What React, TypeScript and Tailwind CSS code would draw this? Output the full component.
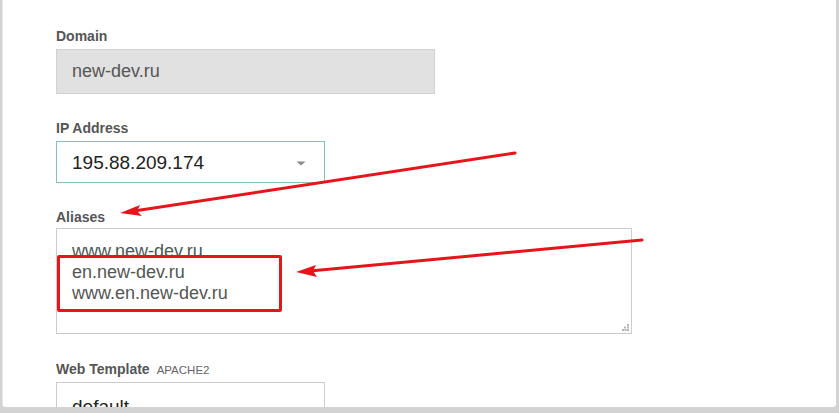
import React from 'react';

function Label({ children }: { children: React.ReactNode }) {
  return <div className="h-4 text-[14px] leading-4 font-bold text-[#555]">{children}</div>;
}

function Caret() {
  return (
    <svg width="10" height="5" viewBox="0 0 10 5" className="block">
      <path d="M0.5 0.5 H9.5 L5 4.5 Z" fill="#8a8a8a" />
    </svg>
  );
}

function Arrows() {
  return (
    <svg className="absolute left-0 top-0 pointer-events-none" width="839" height="413" viewBox="0 0 839 413">
      <line x1="515" y1="153" x2="134" y2="211" stroke="#e8141b" strokeWidth="3" strokeLinecap="round" />
      <path d="M120 213 L140 205 L137 211 L142 216 Z" fill="#e8141b" />
      <line x1="642" y1="240" x2="310" y2="271" stroke="#e8141b" strokeWidth="3" strokeLinecap="round" />
      <path d="M296 272 L316 265 L313 271 L317 277 Z" fill="#e8141b" />
    </svg>
  );
}

export default function App() {
  return (
    <div className="relative w-[839px] h-[413px] overflow-hidden bg-[#d3d3d3] font-['Liberation_Sans',Arial,sans-serif]">
      <div className="ml-[2px] w-[834px] h-[407px] bg-white rounded-b-[3px] border-l border-[#e6e6e6] pl-[53px] pt-[28px] overflow-hidden">
        <Label>Domain</Label>
        <div className="mt-[5px] w-[379px] h-[45px] bg-[#e1e1e1] border border-[#d2d2d2] flex items-center pl-[15px] text-[18px] text-[#555]">
          new-dev.ru
        </div>

        <div className="mt-[26px]">
          <Label>IP Address</Label>
        </div>
        <div className="mt-[5px] w-[269px] h-[42px] border border-[#7fc4bf] flex items-center justify-between pl-[15px] pr-[18px] pt-[3px] text-[19px] text-[#222]">
          <span>195.88.209.174</span>
          <Caret />
        </div>

        <div className="mt-[26px]">
          <Label>Aliases</Label>
        </div>
        <div className="relative mt-[3px] w-[576px] h-[106px] border border-[#cccccc] pl-[15px] pt-[12px] text-[18px] leading-[21px] text-[#555]">
          <div>www.new-dev.ru</div>
          <div>en.new-dev.ru</div>
          <div>www.en.new-dev.ru</div>
          <div className="absolute left-0 top-[26px] w-[225px] h-[57px] border-[3px] border-[#e8141b] rounded-[2px]" />
          <svg className="absolute right-[2px] bottom-[2px]" width="7" height="7" viewBox="0 0 7 7">
            <rect x="5" y="0" width="2" height="2" fill="#b5b5b5" />
            <rect x="2" y="2.5" width="2" height="2" fill="#b5b5b5" />
            <rect x="5" y="2.5" width="2" height="2" fill="#b5b5b5" />
            <rect x="0" y="5" width="2" height="2" fill="#b5b5b5" />
            <rect x="2.5" y="5" width="2" height="2" fill="#b5b5b5" />
            <rect x="5" y="5" width="2" height="2" fill="#b5b5b5" />
          </svg>
        </div>

        <div className="mt-[27px] h-4 flex items-baseline text-[#555]">
          <span className="text-[14px] leading-4 font-bold">Web Template</span>
          <span className="ml-[7px] text-[11.5px] leading-4 text-[#666]">APACHE2</span>
        </div>
        <div className="mt-[5px] w-[269px] h-[42px] border border-[#cccccc] flex items-center pl-[15px] pt-[8px] text-[19px] text-[#222]">
          default
        </div>
      </div>
      <Arrows />
    </div>
  );
}
